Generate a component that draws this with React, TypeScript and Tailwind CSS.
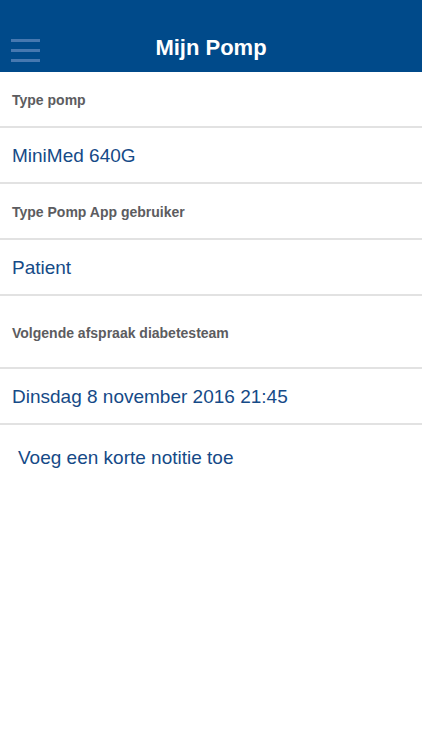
import React from "react";

const Label = ({ text, tall }: { text: string; tall?: boolean }) => (
  <div
    className={`flex items-center px-3 pt-[3px] border-b-2 border-[#e2e2e2] ${
      tall ? "h-[73px]" : "h-[56px]"
    }`}
  >
    <span className="text-[14px] font-bold text-[#5c5c60]">{text}</span>
  </div>
);

const Value = ({ text }: { text: string }) => (
  <div className="flex items-center h-[56px] px-3 pt-[2px] border-b-2 border-[#e2e2e2]">
    <span className="text-[19px] text-[#154a87]">{text}</span>
  </div>
);

export default function App() {
  return (
    <div
      className="w-[422px] h-[750px] bg-white"
      style={{ fontFamily: '"Liberation Sans", Arial, sans-serif' }}
    >
      {/* header */}
      <div className="h-[72px] bg-[#004a8a] flex items-end pb-[9px] px-[11px]">
        <div className="flex flex-col gap-[7px] w-[29px] mb-[1px]">
          <div className="h-[3px] bg-[#4678b0]" />
          <div className="h-[3px] bg-[#4678b0]" />
          <div className="h-[3px] bg-[#4678b0]" />
        </div>
        <div className="flex-1 text-center text-white font-bold text-[22px] leading-[30px] pr-[29px]">
          Mijn Pomp
        </div>
      </div>

      <Label text="Type pomp" />
      <Value text="MiniMed 640G" />
      <Label text="Type Pomp App gebruiker" />
      <Value text="Patient" />
      <Label text="Volgende afspraak diabetesteam" tall />
      <Value text="Dinsdag 8 november 2016 21:45" />

      <div className="px-[18px] pt-[19px] text-[19px] text-[#154a87]">
        Voeg een korte notitie toe
      </div>
    </div>
  );
}
